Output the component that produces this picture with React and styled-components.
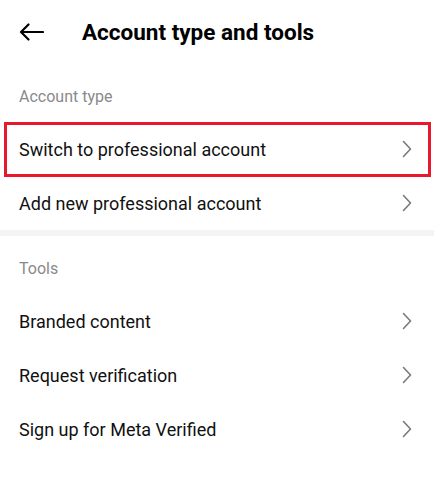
import React from 'react';
import styled, { createGlobalStyle } from 'styled-components';

const GlobalStyle = createGlobalStyle`
  html, body {
    margin: 0;
    padding: 0;
    background: #fff;
  }
  body {
    font-family: Roboto, "Liberation Sans", Arial, sans-serif;
    -webkit-font-smoothing: antialiased;
  }
`;

const Screen = styled.div`
  width: 434px;
  min-height: 482px;
  background: #fff;
  display: flex;
  flex-direction: column;
`;

const Header = styled.header`
  height: 64px;
  display: flex;
  align-items: center;
  padding: 0 19px;
  gap: 38px;
`;

const BackButton = styled.button`
  border: none;
  background: none;
  padding: 0;
  width: 25px;
  height: 18px;
  display: flex;
  align-items: center;
  cursor: pointer;
`;

const Title = styled.h1`
  margin: 0;
  font-size: 22.5px;
  font-weight: 700;
  color: #000;
`;

const Section = styled.section`
  display: flex;
  flex-direction: column;
`;

const SectionLabel = styled.div`
  height: 58px;
  box-sizing: border-box;
  padding: 6px 19px 0;
  display: flex;
  align-items: center;
  font-size: 16px;
  color: #8a8a8a;
`;

const Row = styled.div`
  height: 54px;
  box-sizing: border-box;
  display: flex;
  align-items: center;
  justify-content: space-between;
  padding: 0 22px 0 19px;
  font-size: 18px;
  color: #111;
  position: relative;
`;

const Highlight = styled.span`
  position: absolute;
  left: 4px;
  right: 3px;
  top: 0;
  bottom: -1px;
  border: 3px solid #e8192c;
  pointer-events: none;
`;

const Divider = styled.div`
  height: 6px;
  background: #f4f4f4;
`;

const Chevron = () => (
  <svg width="10" height="18" viewBox="0 0 10 18" fill="none">
    <path d="M1.5 1.5 L8.5 9 L1.5 16.5" stroke="#7a7a7a" strokeWidth="1.6" strokeLinecap="round" strokeLinejoin="round" />
  </svg>
);

const BackArrow = () => (
  <svg width="25" height="18" viewBox="0 0 25 18" fill="none">
    <path d="M24 9 H2 M9.5 1.5 L2 9 L9.5 16.5" stroke="#000" strokeWidth="2.2" strokeLinecap="round" strokeLinejoin="round" />
  </svg>
);

const MenuRow = ({ label, highlighted }) => (
  <Row>
    <span>{label}</span>
    <Chevron />
    {highlighted && <Highlight />}
  </Row>
);

export default function App() {
  return (
    <>
      <GlobalStyle />
      <Screen>
        <Header>
          <BackButton aria-label="Back">
            <BackArrow />
          </BackButton>
          <Title>Account type and tools</Title>
        </Header>

        <Section>
          <SectionLabel>Account type</SectionLabel>
          <MenuRow label="Switch to professional account" highlighted />
          <MenuRow label="Add new professional account" />
        </Section>

        <Divider />

        <Section>
          <SectionLabel>Tools</SectionLabel>
          <MenuRow label="Branded content" />
          <MenuRow label="Request verification" />
          <MenuRow label="Sign up for Meta Verified" />
        </Section>
      </Screen>
    </>
  );
}
